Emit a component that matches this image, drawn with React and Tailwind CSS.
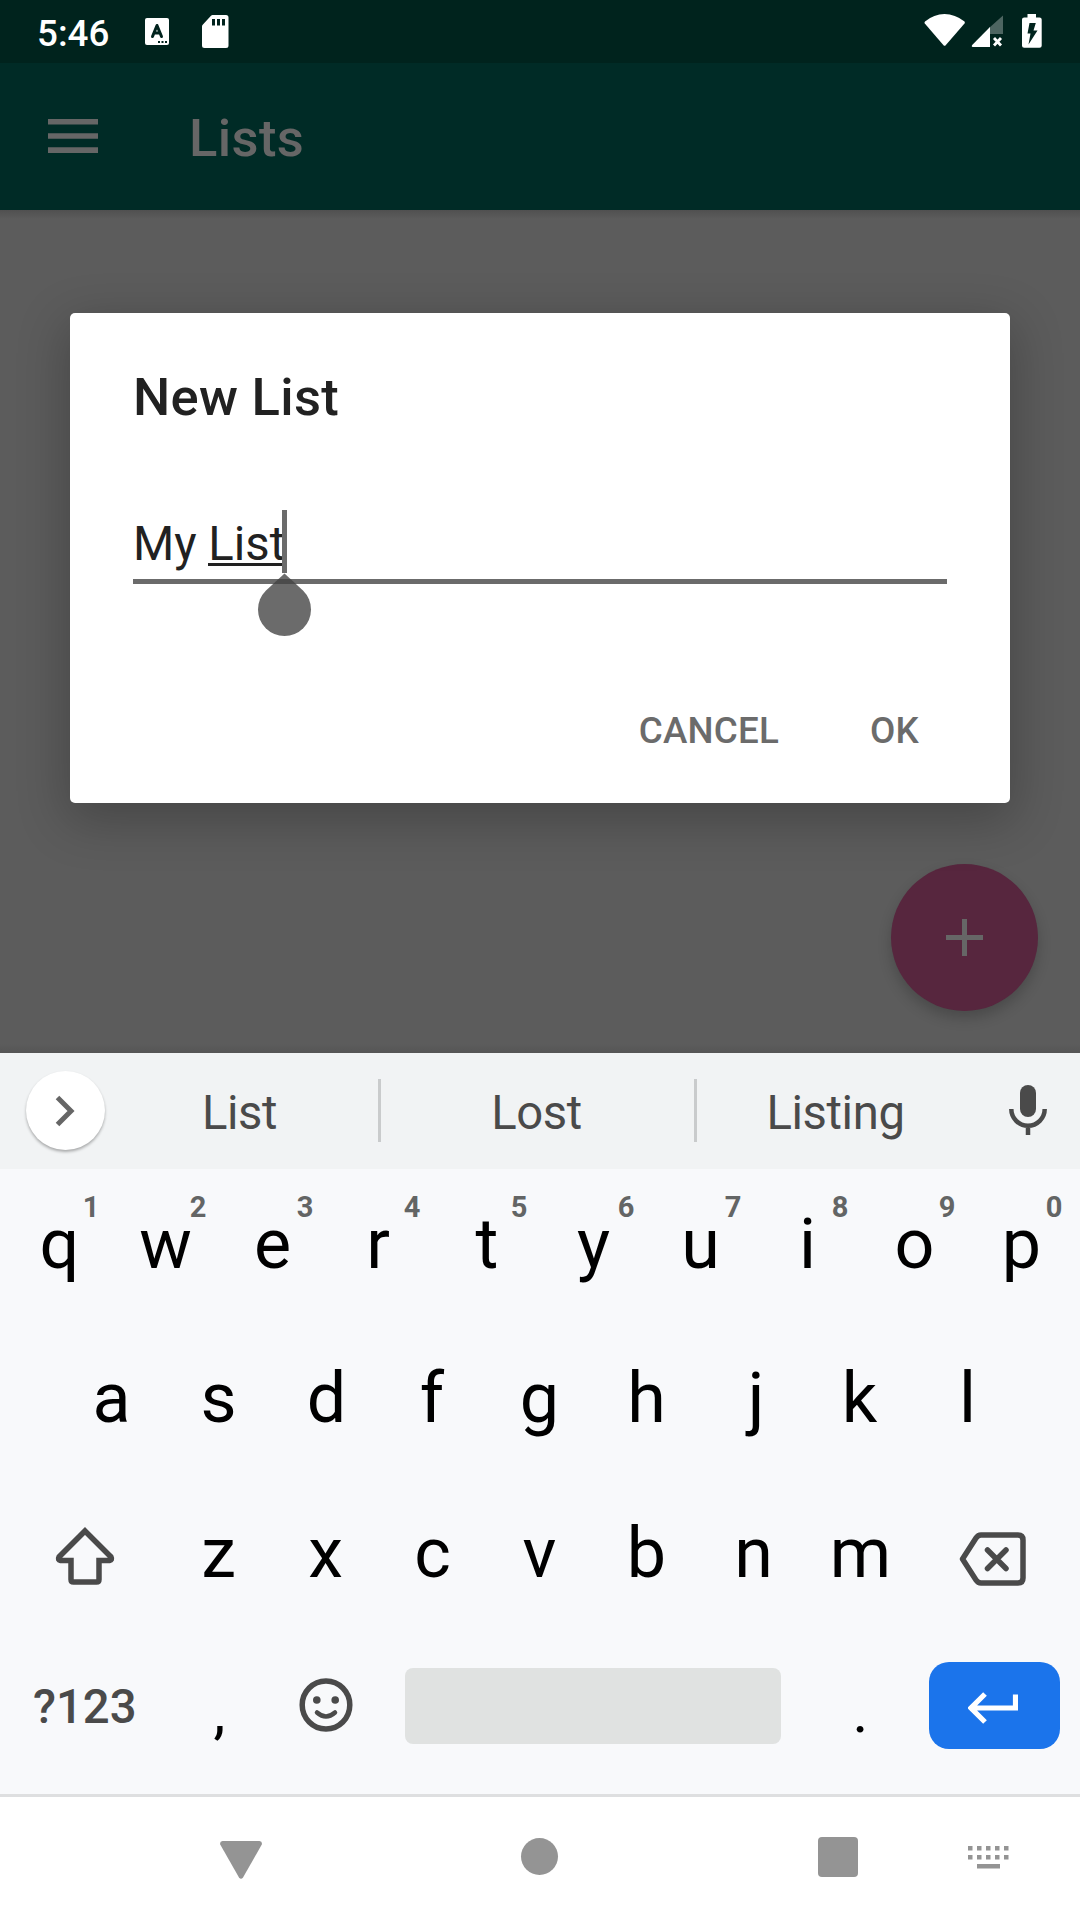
import React from "react";

const topRow = ["q", "w", "e", "r", "t", "y", "u", "i", "o", "p"];
const hints = ["1", "2", "3", "4", "5", "6", "7", "8", "9", "0"];
const homeRow = ["a", "s", "d", "f", "g", "h", "j", "k", "l"];
const bottomRow = ["z", "x", "c", "v", "b", "n", "m"];

// Optical adjustments for letters whose ink is not centred on its advance width
const nudge = { q: "pl-[2px]", r: "pr-[3px]", t: "pl-[1px]", d: "pl-[2px]", j: "pl-[5px]", f: "pr-[1px]", k: "pr-[2px]" };

function Letter({ children, hint }) {
  return (
    <div className={`relative flex h-[90px] w-[107px] items-center justify-center text-[70px] leading-[90px] ${nudge[children] || ""}`}>
      {children}
      {hint && (
        <span className="absolute top-[-9px] left-[72px] w-[28px] text-center text-[29px] leading-[34px] font-bold text-[#636565]">
          {hint}
        </span>
      )}
    </div>
  );
}

function StatusBar() {
  return (
    <header className="flex h-[63px] items-start bg-[#00231d] text-white">
      <span className="mt-[12px] ml-[37px] w-[108px] text-[36.75px] leading-[43px] font-medium">5:46</span>
      <svg className="mt-[18px]" width="24" height="27" viewBox="0 0 24 27">
        <rect width="24" height="27" rx="2" fill="#fff" />
        <path d="M7.500 18.500L12 7.500L16.500 18.500M9 15H15" fill="none" stroke="#00231d" strokeWidth="3" strokeLinecap="round" strokeLinejoin="round" />
        <path d="M13 23h2v2h-2zM16.500 23h2v2h-2zM20 23h2v2h-2z" fill="#00231d" />
      </svg>
      <svg className="mt-[15px] ml-[32px]" width="28" height="33" viewBox="0 0 28 33">
        <path d="M11.500 0H25Q27.500 0 27.500 2.500V30.500Q27.500 33 25 33H3.500Q1 33 1 30.500V11.500Q1 10.500 1.700 9.800L10 0.700Q10.700 0 11.500 0Z" fill="#fff" />
        <path d="M11 4h3v6.500h-3zM16 4h3v6.500h-3zM21 4h3v6.500h-3z" fill="#00231d" />
      </svg>
      <svg className="mt-[14px] ml-auto" width="42" height="33" viewBox="0 0 42 33">
        <path d="M0.800 9.500Q0 8.500 1 7.500Q10 0 20.500 0Q31 0 40.500 7.500Q41.300 8.500 40.500 9.500L21.700 31.200Q20.600 32.400 19.500 31.200Z" fill="#fff" />
      </svg>
      <svg className="mt-[15px] ml-[5px]" width="33" height="33" viewBox="0 0 33 33">
        <path d="M32 0.500V19H18V13Z" fill="#fff" fillOpacity=".3" />
        <path d="M19 12V32H1.500Q0 31.500 1.200 30Z" fill="#fff" />
        <path d="M23 23L30 30.500M30 23L23 30.500" stroke="#fff" strokeWidth="2.800" />
      </svg>
      <svg className="mt-[14px] mr-[38px] ml-[18px]" width="20" height="34" viewBox="0 0 20 34">
        <path d="M5.500 0H14V3.500H17.500Q19.700 3.500 19.700 5.500V31.700Q19.700 33.700 17.500 33.700H2.200Q0 33.700 0 31.700V5.500Q0 3.500 2.200 3.500H5.500Z" fill="#fff" />
        <path d="M7.500 9H13.800L11.500 16.500H15.500L6.500 30.500L8.500 19.500H5.500Z" fill="#00231d" />
      </svg>
    </header>
  );
}

function Dialog() {
  return (
    <section className="absolute top-[313px] left-[70px] flex h-[490px] w-[940px] flex-col rounded-[5px] bg-white px-[63px] shadow-[0_14px_50px_4px_rgba(0,0,0,0.24)]">
      <h2 className="mt-[52px] text-[52.5px] leading-[64px] font-medium tracking-[0.3px] text-[#212121]">New List</h2>
      <div className="relative mt-[79px] flex h-[76px] border-b-[5px] border-[#6b6b6b] pt-[6px] text-[47.25px] leading-[60px] text-[#212121]">
        <span className="whitespace-pre">My </span>
        <span className="relative">
          List
          <span className="absolute top-[49px] left-0 h-[3px] w-full bg-[#212121]" />
        </span>
        <span className="absolute top-[2px] left-[149px] h-[63px] w-[5px] bg-[#6b6b6b]" />
        <svg className="absolute top-[65px] left-[124px]" width="55" height="64" viewBox="0 0 55 64">
          <path d="M27.500 0.500L46.240 17.760A26.500 26.500 0 1 1 8.760 17.760Z" fill="#6b6b6b" />
          <path d="M21.500 6H33.500L39 11H16Z" fill="#4b4b4b" />
        </svg>
      </div>
      <div className="mt-[115px] mr-[28px] flex justify-end gap-[91px] text-[36.75px] leading-[64px] font-medium tracking-[0.2px] text-[#6b6b6b]">
        <button>CANCEL</button>
        <button>OK</button>
      </div>
    </section>
  );
}

function Suggestions() {
  return (
    <div className="flex h-[116px] items-center bg-[#f1f3f4] text-[47.25px] tracking-[-0.4px] text-[#4a4a4a]">
      <div className="mb-px ml-[26px] flex size-[79px] items-center justify-center rounded-full bg-white shadow-[0_2px_3px_rgba(0,0,0,0.3)]">
        <svg className="mr-[2px]" width="20" height="32" viewBox="0 0 20 32">
          <path d="M2.500 2.500L16 16L2.500 29.500" fill="none" stroke="#666" strokeWidth="5" />
        </svg>
      </div>
      <span className="mt-[5px] w-[273px] pr-[4px] text-center">List</span>
      <span className="mb-px h-[63px] w-[3px] bg-[#c9cbcc]" />
      <span className="mt-[5px] w-[313px] pr-[2px] text-center">Lost</span>
      <span className="mb-px h-[63px] w-[3px] bg-[#c9cbcc]" />
      <span className="mt-[5px] w-[277px] text-center">Listing</span>
      <svg className="mb-[2px] ml-[35px]" width="38" height="50" viewBox="0 0 38 50">
        <rect x="11" width="16" height="32" rx="8" fill="#4a4a4a" />
        <path d="M2.300 24A16.700 16.700 0 0 0 35.700 24M19 40V50" fill="none" stroke="#4a4a4a" strokeWidth="4.500" />
      </svg>
    </div>
  );
}

function Keyboard() {
  return (
    <main className="h-[741px] bg-[#f8f9fb] text-black">
      <Suggestions />
      <div className="mt-[30px] flex pl-[5px]">
        {topRow.map((k, i) => <Letter key={k} hint={hints[i]}>{k}</Letter>)}
      </div>
      <div className="mt-[64px] flex pl-[58px]">
        {homeRow.map((k) => <Letter key={k}>{k}</Letter>)}
      </div>
      <div className="mt-[65px] flex">
        <div className="flex w-[165px] items-center pt-[5px] pl-[55px]">
          <svg width="60" height="58" viewBox="0 0 60 58">
            <path d="M30 4L56 30Q57.500 33 54.500 33.500H44V52.500Q44 55 41.500 55H18.500Q16 55 16 52.500V33.500H5.500Q2.500 33 4 30Z" fill="none" stroke="#4a4a4a" strokeWidth="5.500" />
          </svg>
        </div>
        {bottomRow.map((k) => <Letter key={k}>{k}</Letter>)}
        <div className="flex items-center pt-[11px] pl-[45px]">
          <svg width="67" height="54" viewBox="0 0 67 54">
            <path d="M3.500 27L17 6Q19 3 22 3H59Q64 3 64 8V46Q64 51 59 51H22Q19 51 17 48Z" fill="none" stroke="#4a4a4a" strokeWidth="5.500" strokeLinejoin="round" />
            <path d="M28.500 18L47 36.500M47 18L28.500 36.500" stroke="#4a4a4a" strokeWidth="5.500" strokeLinecap="round" />
          </svg>
        </div>
      </div>
      <div className="mt-[52px] flex h-[110px] items-center">
        <span className="w-[138px] pt-[4px] pl-[33px] text-[47.25px] font-medium text-[#4a4a4a]">?123</span>
        <span className="mt-[13px] ml-[28px] w-[107px] text-center text-[60px] leading-[90px]">,</span>
        <svg className="ml-[26px]" width="54" height="56" viewBox="0 0 54 56">
          <ellipse cx="27" cy="28" rx="23.800" ry="24" fill="none" stroke="#4a4a4a" strokeWidth="5.500" />
          <circle cx="17.800" cy="23" r="3.800" fill="#4a4a4a" />
          <circle cx="36.200" cy="23" r="3.800" fill="#4a4a4a" />
          <path d="M18 35.500Q27 43.500 36 35.500" fill="none" stroke="#4a4a4a" strokeWidth="4.500" strokeLinecap="round" />
        </svg>
        <span className="mt-[2px] ml-[52px] h-[76px] w-[376px] rounded-[8px] bg-[#e0e2e1]" />
        <span className="mt-[13px] ml-[26px] w-[107px] text-center text-[60px] leading-[90px]">.</span>
        <button className="ml-[15px] flex h-[87px] w-[131px] items-center justify-center rounded-[20px] bg-[#1b74eb]">
          <svg className="mt-[5px] mr-[4px]" width="50" height="32" viewBox="0 0 50 32">
            <path d="M47.500 2.500V16H4M17 2L3 16L17 30" fill="none" stroke="#fff" strokeWidth="5.200" />
          </svg>
        </button>
      </div>
    </main>
  );
}

function NavigationBar() {
  return (
    <nav className="flex h-[126px] items-start border-t-[3px] border-[#dedfe0] bg-white">
      <svg className="mt-[44px] ml-[220px]" width="42" height="38" viewBox="0 0 42 38">
        <path d="M2.500 0H39.500Q42.500 0.500 41.800 3.500L23 36.500Q21 39 19 36.500L0.200 3.500Q-0.500 0.500 2.500 0Z" fill="#949494" />
      </svg>
      <span className="mt-[41px] ml-[259px] size-[37px] rounded-full bg-[#949494]" />
      <span className="mt-[40px] ml-[260px] h-[40px] w-[40px] rounded-[4px] bg-[#949494]" />
      <svg className="mt-[49px] ml-[110px]" width="41" height="23" viewBox="0 0 41 23">
        {[0, 9, 18, 27, 36].map((x) => (
          <path key={x} d={`M${x} 0h4.500v4.500h-4.500zM${x} 9h4.500v4.500h-4.500z`} fill="#949494" />
        ))}
        <rect x="9" y="18" width="23" height="4.500" fill="#949494" />
      </svg>
    </nav>
  );
}

export default function App() {
  return (
    <div className="relative h-[1920px] w-[1080px] overflow-hidden bg-white font-['Roboto',sans-serif]">
      <StatusBar />
      <div className="flex h-[147px] items-center bg-[#002b26] text-[#666]">
        <svg className="mb-px ml-[48px]" width="50" height="34" viewBox="0 0 50 34">
          <path d="M0 0h50v5.500H0zM0 14.200h50v5.500H0zM0 28.200h50v5.800H0z" fill="#666" />
        </svg>
        <h1 className="mt-[2px] ml-[91px] text-[52.5px] leading-[62px] font-medium tracking-[0.4px]">Lists</h1>
      </div>
      <div className="flex h-[843px] items-end justify-end bg-[#5c5c5c] bg-[linear-gradient(to_bottom,#505050_0,#5c5c5c_9px,#5c5c5c_834px,#555555_843px)] pr-[42px] pb-[42px]">
        <button className="flex size-[147px] items-center justify-center rounded-full bg-[#57263e] shadow-[0_7px_14px_rgba(0,0,0,0.2)]">
          <svg width="37" height="37" viewBox="0 0 37 37">
            <path d="M16 0h5v16h16v5H21v16h-5V21H0v-5h16z" fill="#666" />
          </svg>
        </button>
      </div>
      <Dialog />
      <div className="relative">
        <Keyboard />
        <NavigationBar />
      </div>
    </div>
  );
}
